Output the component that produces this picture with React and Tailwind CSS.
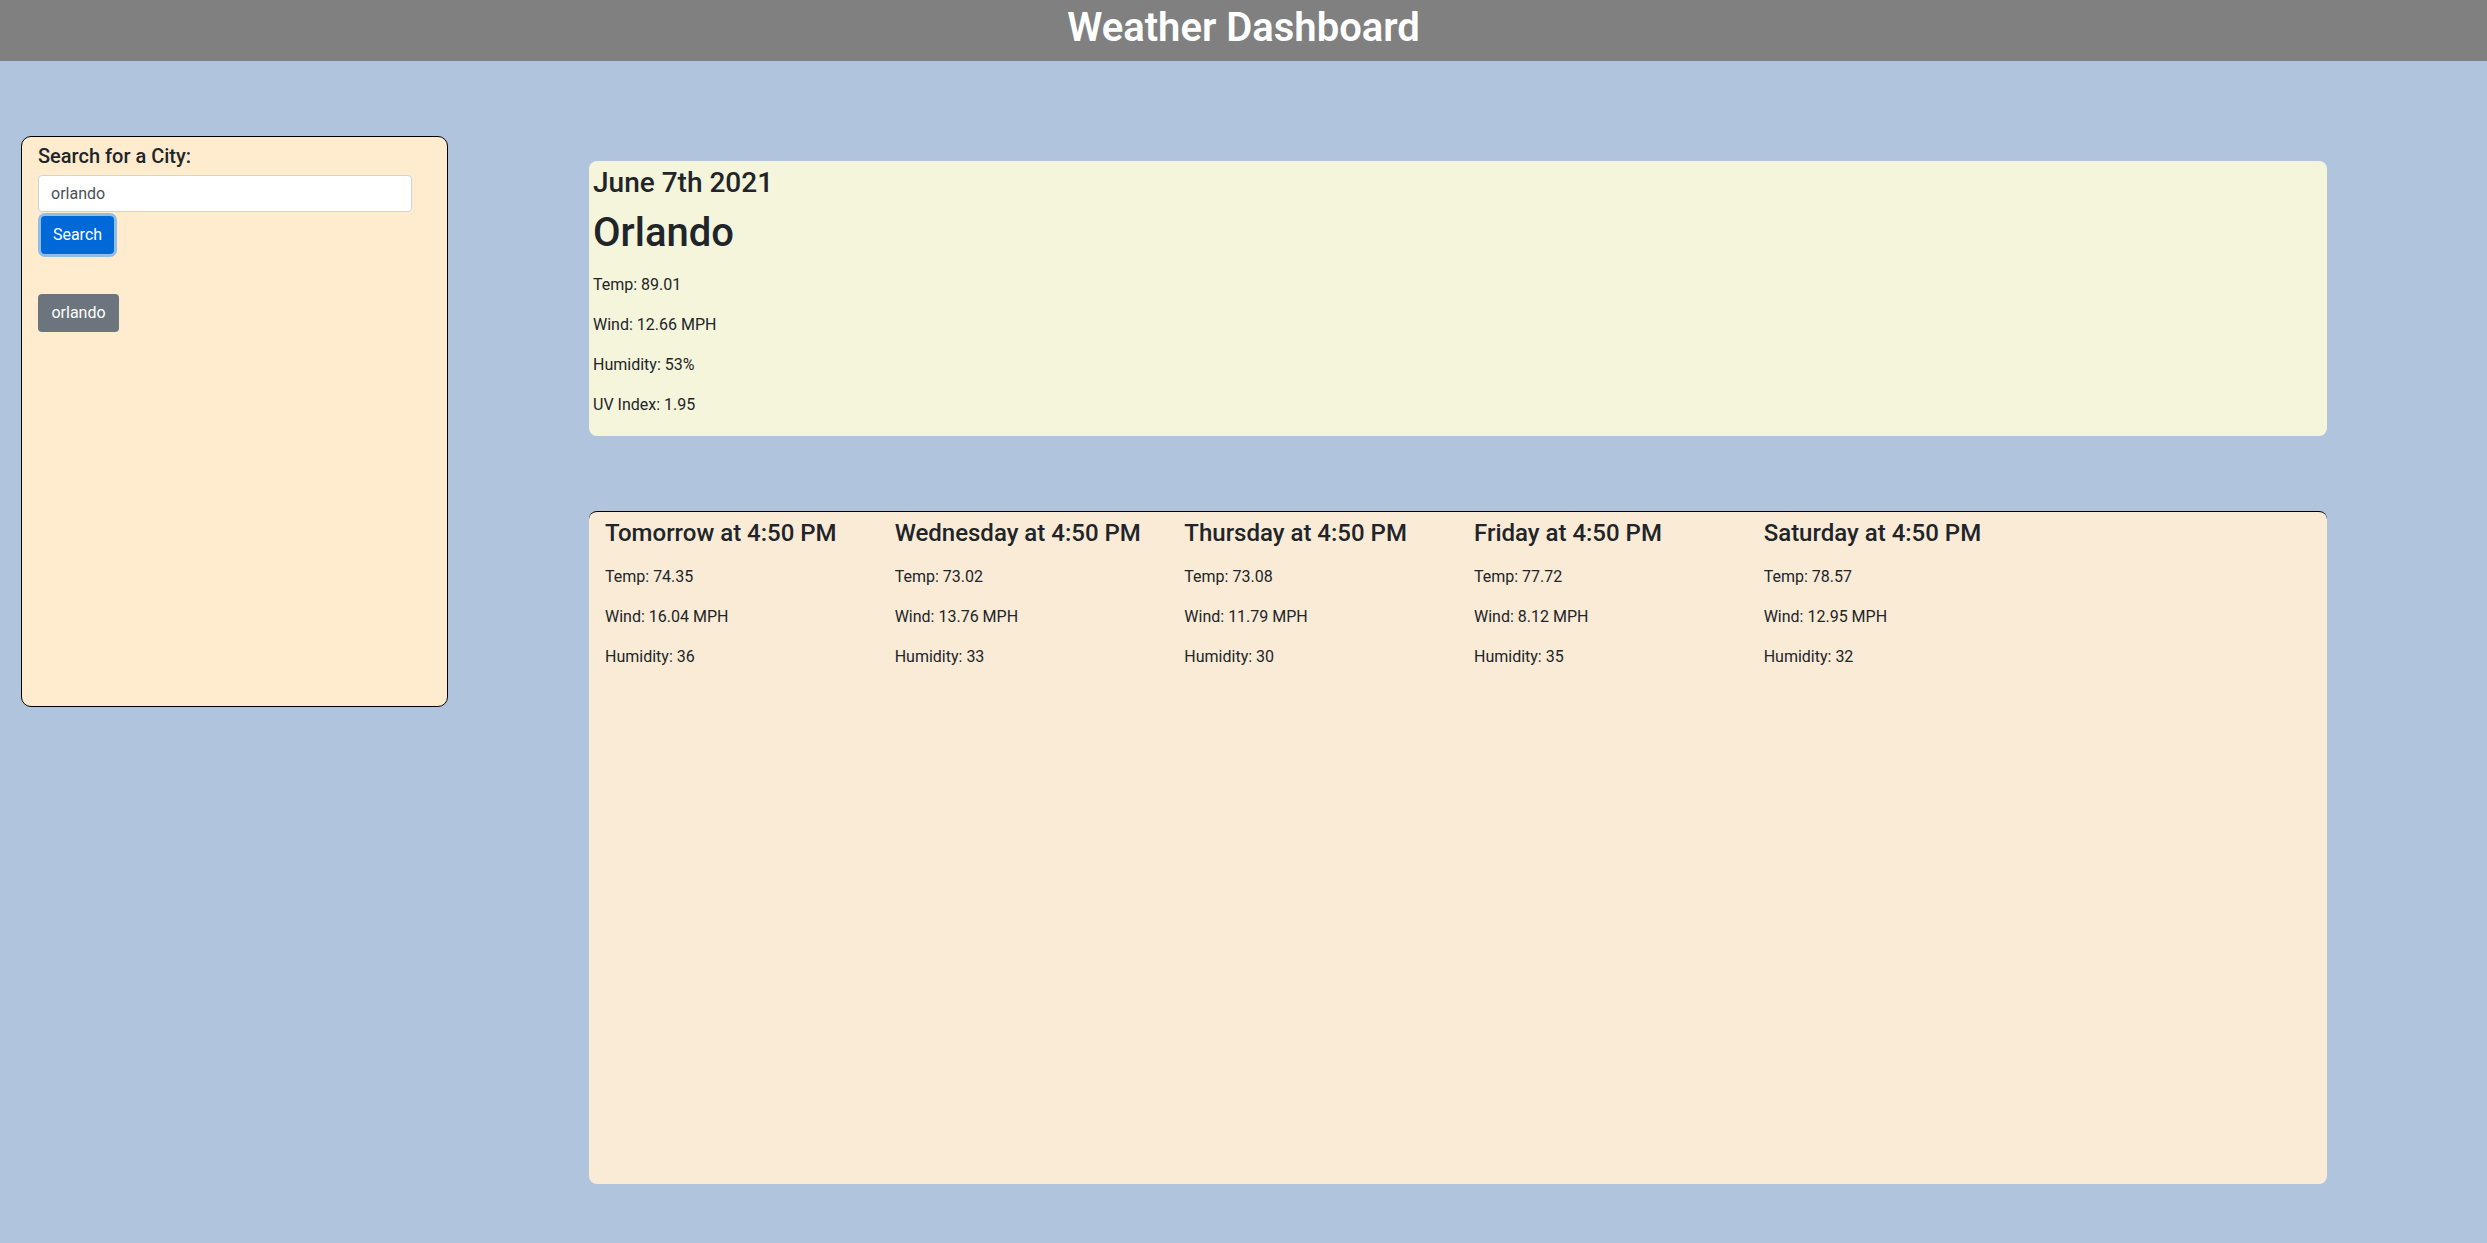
import React, { useState } from "react";

const FONT = { fontFamily: '"Segoe UI", Roboto, "Noto Sans", "Liberation Sans", sans-serif' };

const current = {
  date: "June 7th 2021",
  city: "Orlando",
  rows: ["Temp: 89.01", "Wind: 12.66 MPH", "Humidity: 53%", "UV Index: 1.95"],
};

const forecast = [
  { day: "Tomorrow at 4:50 PM", temp: "74.35", wind: "16.04", hum: "36" },
  { day: "Wednesday at 4:50 PM", temp: "73.02", wind: "13.76", hum: "33" },
  { day: "Thursday at 4:50 PM", temp: "73.08", wind: "11.79", hum: "30" },
  { day: "Friday at 4:50 PM", temp: "77.72", wind: "8.12", hum: "35" },
  { day: "Saturday at 4:50 PM", temp: "78.57", wind: "12.95", hum: "32" },
];

export default function App() {
  const [city, setCity] = useState("orlando");

  return (
    <div className="min-h-[1243px] w-full bg-[#b0c4de] text-[#212529]" style={FONT}>
      {/* header */}
      <header className="h-[61px] bg-[#808080] pt-[4px] text-center">
        <h1 className="text-[40px] leading-[48px] font-semibold text-white">Weather Dashboard</h1>
      </header>

      <div className="flex items-start">
        {/* search panel */}
        <aside className="ml-[21px] mt-[75px] h-[571px] w-[427px] shrink-0 rounded-[10px] border border-black bg-[#ffebcd] px-4 pt-[7px]">
          <label className="block text-[20px] leading-[24px] font-medium">Search for a City:</label>
          <input
            value={city}
            onChange={(e) => setCity(e.target.value)}
            className="mt-[7px] block h-[37px] w-[374px] rounded border border-[#ced4da] bg-white px-3 text-[16px] text-[#495057] outline-none"
          />
          <button className="mt-[4px] ml-[3px] block h-[38px] w-[73px] rounded bg-[#0069d9] text-[16px] text-white shadow-[0_0_0_3px_rgba(38,143,255,0.5)]">
            Search
          </button>
          <button className="mt-[40px] block h-[38px] w-[81px] rounded bg-[#6c757d] text-[16px] text-white">
            orlando
          </button>
        </aside>

        {/* right column */}
        <main className="ml-[141px] mt-[100px] w-[1738px] shrink-0">
          <section className="h-[275px] rounded-lg bg-[#f5f5dc] pl-[4px] pt-[5px]">
            <h3 className="text-[28px] leading-[34px] font-medium">{current.date}</h3>
            <h2 className="mt-[9px] text-[40px] leading-[48px] font-medium">{current.city}</h2>
            <div className="mt-[16px]">
              {current.rows.map((r) => (
                <p key={r} className="mb-[16px] text-[16px] leading-[24px]">{r}</p>
              ))}
            </div>
          </section>

          <section className="mt-[75px] grid h-[673px] grid-cols-6 content-start rounded-lg border-t border-black bg-[#faebd7] pt-[7px]">
            {forecast.map((f) => (
              <div key={f.day} className="pl-4">
                <h4 className="text-[24px] leading-[29px] font-medium whitespace-nowrap">{f.day}</h4>
                <p className="mt-[17px] text-[16px] leading-[24px]">Temp: {f.temp}</p>
                <p className="mt-[16px] text-[16px] leading-[24px]">Wind: {f.wind} MPH</p>
                <p className="mt-[16px] text-[16px] leading-[24px]">Humidity: {f.hum}</p>
              </div>
            ))}
          </section>
        </main>
      </div>
    </div>
  );
}
